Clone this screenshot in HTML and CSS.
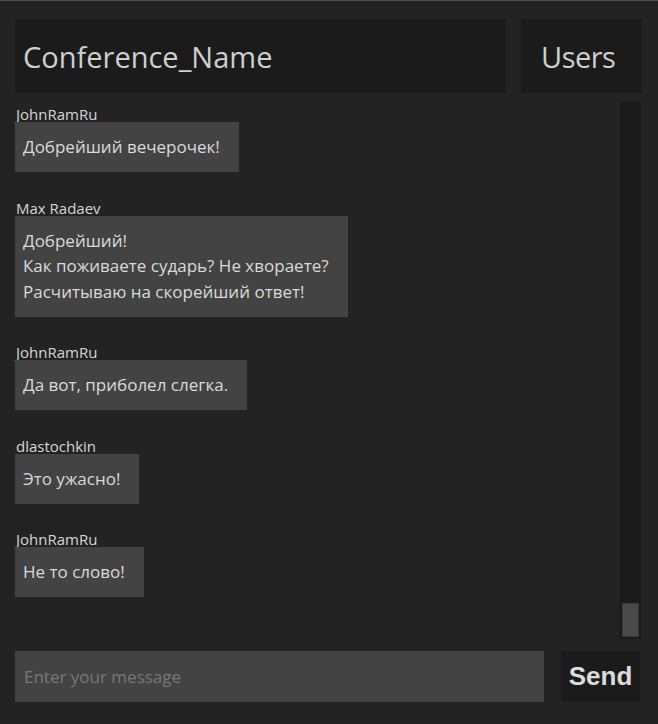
FILE: index.html
```html
<!DOCTYPE html>
<html lang="ru">
<head>
<meta charset="utf-8">
<title>Conference</title>
<link rel="stylesheet" href="styles.css">
</head>
<body>
<div class="app">
  <header class="top">
    <div class="conf-name">Conference_Name</div>
    <div class="users">Users</div>
  </header>
  <main class="main">
    <div class="messages">
      <div class="msg">
        <div class="author">JohnRamRu</div>
        <div class="bubble">Добрейший вечерочек!</div>
      </div>
      <div class="msg">
        <div class="author">Max Radaev</div>
        <div class="bubble">Добрейший!<br>Как поживаете сударь? Не хвораете?<br>Расчитываю на скорейший ответ!</div>
      </div>
      <div class="msg">
        <div class="author">JohnRamRu</div>
        <div class="bubble">Да вот, приболел слегка.</div>
      </div>
      <div class="msg">
        <div class="author">dlastochkin</div>
        <div class="bubble">Это ужасно!</div>
      </div>
      <div class="msg">
        <div class="author">JohnRamRu</div>
        <div class="bubble">Не то слово!</div>
      </div>
    </div>
    <div class="scrollbar"><div class="thumb"></div></div>
  </main>
  <footer class="composer">
    <div class="input">Enter your message</div>
    <div class="send">Send</div>
  </footer>
</div>
</body>
</html>
```

FILE: styles.css
```css
html, body {
  margin: 0;
  padding: 0;
  height: 100%;
}
body {
  background: #232323;
  border-top: 1px solid #505050;
  box-sizing: border-box;
  font-family: "Open Sans", "DejaVu Sans", sans-serif;
  color: #d2d2d2;
  overflow: hidden;
}
.app {
  display: flex;
  flex-direction: column;
  height: 723px;
}
.top {
  display: flex;
  gap: 15px;
  padding: 18px 16px 0 15px;
  height: 74px;
  flex: none;
}
.conf-name {
  flex: 1;
  background: #1b1b1b;
  display: flex;
  align-items: center;
  padding-left: 8px;
  font-size: 29px;
  color: #cfcfcf;
}
.users {
  width: 121px;
  flex: none;
  background: #1b1b1b;
  display: flex;
  align-items: center;
  padding-left: 20px;
  box-sizing: border-box;
  font-size: 29px;
  letter-spacing: -0.5px;
  color: #cfcfcf;
}
.main {
  display: flex;
  height: 546px;
  flex: none;
  box-sizing: border-box;
  padding: 8px 17px 0 15px;
}
.messages {
  flex: 1;
  display: flex;
  flex-direction: column;
  align-items: flex-start;
  gap: 27.5px;
  padding-top: 5px;
}
.msg {
  display: flex;
  flex-direction: column;
  align-items: flex-start;
}
.author {
  font-size: 15px;
  line-height: 16px;
  padding-left: 1px;
  color: #d6d6d6;
}
.bubble {
  background: #434343;
  font-size: 17px;
  line-height: 25.5px;
  padding: 12px 19px 12.5px 8px;
  color: #dadada;
}
.bubble-wide {
  padding-right: 24px;
}
.scrollbar {
  width: 21px;
  height: 538px;
  background: #1b1b1b;
  box-sizing: border-box;
  padding: 0 2px 2px 2px;
  display: flex;
  flex-direction: column;
  justify-content: flex-end;
}
.thumb {
  height: 34px;
  background: #4a4a4a;
  border: 1px solid #3a3a3a;
  box-sizing: border-box;
}
.composer {
  display: flex;
  gap: 17px;
  padding: 12px 18px 0 15px;
  height: 51px;
  flex: none;
}
.input {
  flex: 1;
  background: #434343;
  display: flex;
  align-items: center;
  padding-left: 9px;
  font-size: 17px;
  color: #787878;
}
.send {
  width: 79px;
  flex: none;
  background: #1b1b1b;
  display: flex;
  align-items: center;
  justify-content: center;
  font-family: "Liberation Sans", Arial, sans-serif;
  font-weight: bold;
  font-size: 26px;
  color: #dcdcdc;
}
```
